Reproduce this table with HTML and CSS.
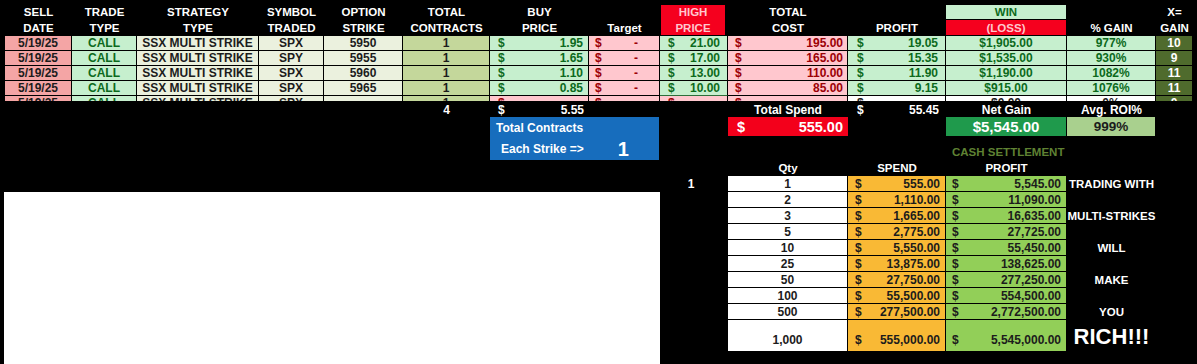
FILE: index.html
```html
<!DOCTYPE html>
<html>
<head>
<meta charset="utf-8">
<title>SSX Multi Strike</title>
<link rel="stylesheet" href="styles.css">
</head>
<body>
<div class="sheet">
  <div class="hd"><span>SELL</span><span>DATE</span></div>
  <div class="hd"><span>TRADE</span><span>TYPE</span></div>
  <div class="hd"><span>STRATEGY</span><span>TYPE</span></div>
  <div class="hd"><span>SYMBOL</span><span>TRADED</span></div>
  <div class="hd"><span>OPTION</span><span>STRIKE</span></div>
  <div class="hd"><span>TOTAL</span><span>CONTRACTS</span></div>
  <div class="hd"><span>BUY</span><span>PRICE</span></div>
  <div class="hd"><span>&nbsp;</span><span>Target</span></div>
  <div class="hd hd-high"><span>HIGH</span><span>PRICE</span></div>
  <div class="hd"><span>TOTAL</span><span>COST</span></div>
  <div class="hd"><span>&nbsp;</span><span>PROFIT</span></div>
  <div class="hd-win">WIN</div>
  <div class="hd-loss">(LOSS)</div>
  <div class="hd"><span>&nbsp;</span><span>% GAIN</span></div>
  <div class="hd"><span>X=</span><span>GAIN</span></div>

  <!-- row 1 -->
  <div class="d date">5/19/25</div>
  <div class="d good">CALL</div>
  <div class="d pale">SSX MULTI STRIKE</div>
  <div class="d pale">SPX</div>
  <div class="d pale">5950</div>
  <div class="d olive">1</div>
  <div class="d good m m-buy"><span>$</span><span>1.95</span></div>
  <div class="d bad m m-tgt"><span>$</span><span class="dash">-</span></div>
  <div class="d good m m-high"><span>$</span><span>21.00</span></div>
  <div class="d bad m m-cost"><span>$</span><span>195.00</span></div>
  <div class="d good m m-profit"><span>$</span><span>19.05</span></div>
  <div class="d good">$1,905.00</div>
  <div class="d good">977%</div>
  <div class="d dark">10</div>

  <!-- row 2 -->
  <div class="d date">5/19/25</div>
  <div class="d good">CALL</div>
  <div class="d pale">SSX MULTI STRIKE</div>
  <div class="d pale">SPY</div>
  <div class="d pale">5955</div>
  <div class="d olive">1</div>
  <div class="d good m m-buy"><span>$</span><span>1.65</span></div>
  <div class="d bad m m-tgt"><span>$</span><span class="dash">-</span></div>
  <div class="d good m m-high"><span>$</span><span>17.00</span></div>
  <div class="d bad m m-cost"><span>$</span><span>165.00</span></div>
  <div class="d good m m-profit"><span>$</span><span>15.35</span></div>
  <div class="d good">$1,535.00</div>
  <div class="d good">930%</div>
  <div class="d dark">9</div>

  <!-- row 3 -->
  <div class="d date">5/19/25</div>
  <div class="d good">CALL</div>
  <div class="d pale">SSX MULTI STRIKE</div>
  <div class="d pale">SPX</div>
  <div class="d pale">5960</div>
  <div class="d olive">1</div>
  <div class="d good m m-buy"><span>$</span><span>1.10</span></div>
  <div class="d bad m m-tgt"><span>$</span><span class="dash">-</span></div>
  <div class="d good m m-high"><span>$</span><span>13.00</span></div>
  <div class="d bad m m-cost"><span>$</span><span>110.00</span></div>
  <div class="d good m m-profit"><span>$</span><span>11.90</span></div>
  <div class="d good">$1,190.00</div>
  <div class="d good">1082%</div>
  <div class="d dark">11</div>

  <!-- row 4 -->
  <div class="d date">5/19/25</div>
  <div class="d good">CALL</div>
  <div class="d pale">SSX MULTI STRIKE</div>
  <div class="d pale">SPX</div>
  <div class="d pale">5965</div>
  <div class="d olive">1</div>
  <div class="d good m m-buy"><span>$</span><span>0.85</span></div>
  <div class="d bad m m-tgt"><span>$</span><span class="dash">-</span></div>
  <div class="d good m m-high high-last"><span>$</span><span>10.00</span></div>
  <div class="d bad m m-cost"><span>$</span><span>85.00</span></div>
  <div class="d good m m-profit"><span>$</span><span>9.15</span></div>
  <div class="d good">$915.00</div>
  <div class="d good">1076%</div>
  <div class="d dark">11</div>

  <!-- row 5, cut off by the window of the sheet -->
  <div class="d p date">5/19/25</div>
  <div class="d p good">CALL</div>
  <div class="d p pale">SSX MULTI STRIKE</div>
  <div class="d p pale">SPX</div>
  <div class="d p pale">-</div>
  <div class="d p olive">1</div>
  <div class="d p bad m m-buy"><span>$</span><span></span></div>
  <div class="d p bad m m-tgt"><span>$</span><span class="dash">-</span></div>
  <div class="d p bad m m-high"><span>$</span><span></span></div>
  <div class="d p bad m m-cost"><span>$</span><span></span></div>
  <div class="d p blank m m-profit"><span>$</span><span></span></div>
  <div class="d p blank">$0.00</div>
  <div class="d p blank">0%</div>
  <div class="d p dark">0</div>

  <!-- summary -->
  <div class="sum sum-count">4</div>
  <div class="sum sum-buy m m-buy"><span>$</span><span>5.55</span></div>
  <div class="sum sum-spend-label">Total Spend</div>
  <div class="sum sum-profit m m-profit"><span>$</span><span>55.45</span></div>
  <div class="sum sum-net-label">Net Gain</div>
  <div class="sum sum-roi-label">Avg. ROI%</div>

  <div class="blue">
    <div class="blue-l1">Total Contracts</div>
    <div class="blue-l2"><span>Each Strike =&gt;</span><span class="big-one">1</span></div>
  </div>
  <div class="spend-box"><span>$</span><span>555.00</span></div>
  <div class="net-box">$5,545.00</div>
  <div class="roi-box">999%</div>

  <div class="cash-title">CASH SETTLEMENT</div>
  <div class="ch ch-qty">Qty</div>
  <div class="ch ch-spend">SPEND</div>
  <div class="ch ch-profit">PROFIT</div>
  <div class="multi">1</div>

  <div class="cash">
    <div class="q">1</div><div class="s"><span>$</span><span>555.00</span></div><div class="g"><span>$</span><span>5,545.00</span></div>
    <div class="q">2</div><div class="s"><span>$</span><span>1,110.00</span></div><div class="g"><span>$</span><span>11,090.00</span></div>
    <div class="q">3</div><div class="s"><span>$</span><span>1,665.00</span></div><div class="g"><span>$</span><span>16,635.00</span></div>
    <div class="q">5</div><div class="s"><span>$</span><span>2,775.00</span></div><div class="g"><span>$</span><span>27,725.00</span></div>
    <div class="q">10</div><div class="s"><span>$</span><span>5,550.00</span></div><div class="g"><span>$</span><span>55,450.00</span></div>
    <div class="q">25</div><div class="s"><span>$</span><span>13,875.00</span></div><div class="g"><span>$</span><span>138,625.00</span></div>
    <div class="q">50</div><div class="s"><span>$</span><span>27,750.00</span></div><div class="g"><span>$</span><span>277,250.00</span></div>
    <div class="q">100</div><div class="s"><span>$</span><span>55,500.00</span></div><div class="g"><span>$</span><span>554,500.00</span></div>
    <div class="q">500</div><div class="s"><span>$</span><span>277,500.00</span></div><div class="g"><span>$</span><span>2,772,500.00</span></div>
    <div class="q last">1,000</div><div class="s last"><span>$</span><span>555,000.00</span></div><div class="g last"><span>$</span><span>5,545,000.00</span></div>
  </div>

  <div class="slogan">
    <div>TRADING WITH</div>
    <div></div>
    <div>MULTI-STRIKES</div>
    <div></div>
    <div>WILL</div>
    <div></div>
    <div>MAKE</div>
    <div></div>
    <div>YOU</div>
    <div class="rich">RICH!!!</div>
  </div>

  <div class="chart"></div>
</div>
</body>
</html>
```

FILE: styles.css
```css
* { box-sizing: border-box; margin: 0; padding: 0; }

html, body {
  background: #000;
}

body {
  width: 1197px;
  height: 364px;
  overflow: hidden;
  padding-top: 5px;
  font-family: "Liberation Sans", Arial, sans-serif;
  font-weight: 700;
  font-size: 12px;
  color: #fff;
}

.sheet {
  display: grid;
  margin-left: 5px;
  grid-template-columns: 67px 65px 122px 65px 79px 87px 99px 71px 68px 120px 98px 121px 89px 37px;
  grid-template-rows: 15px 16px 15px 15px 15px 15px 5px 3px 13px 19px 24px 16px repeat(9, 16px) 32px 12px;
}

/* header */
.hd {
  grid-row: 1 / 3;
  display: flex;
  flex-direction: column;
  align-items: center;
  font-size: 11.5px;
  line-height: 15px;
  white-space: nowrap;
}
.hd span { display: block; height: 15px; }
.hd span:last-child { height: 16px; line-height: 16px; }

.hd-high {
  background: #f5001e;
  color: #ffc7ce;
  margin: 0 3px 1px 1px;
}

.hd-win {
  grid-area: 1 / 12;
  background: #c6efce;
  color: #0c6a1c;
  font-size: 11.5px;
  display: flex;
  align-items: center;
  justify-content: center;
  margin: 0 1px 1px 0;
}
.hd-loss {
  grid-area: 2 / 12;
  background: #f5001e;
  color: #ffc7ce;
  font-size: 11.5px;
  display: flex;
  align-items: center;
  justify-content: center;
  margin: 0 1px 1px 0;
}

/* data cells */
.d {
  display: flex;
  align-items: center;
  justify-content: center;
  border-right: 1px solid #000;
  border-bottom: 1px solid #000;
  line-height: 14px;
  white-space: nowrap;
  overflow: hidden;
}
.d.p {
  align-items: flex-start;
  border-bottom: 0;
}

.date  { background: #f4a5a5; color: #1c1c1c; }
.good  { background: #c6efce; color: #0c6a1c; }
.pale  { background: #ebf1de; color: #1c1c1c; }
.olive { background: #c4d79b; color: #1c1c1c; }
.bad   { background: #ffc7ce; color: #9c0006; }
.dark  { background: #4f6b2d; color: #fff; }
.blank { background: #fff; color: #1c1c1c; }

.m { justify-content: space-between; }
.m-buy    { padding: 0 5px 0 8px; }
.m-tgt    { padding: 0 4px 0 6px; }
.m-high   { padding: 0 7px 0 8px; }
.m-cost   { padding: 0 4px 0 7px; }
.m-profit { padding: 0 7px 0 9px; }
.dash { padding-right: 17px; }

.high-last { border-bottom-color: #2c6e3a; }

/* summary row */
.sum {
  display: flex;
  align-items: center;
  justify-content: center;
  line-height: 13px;
  white-space: nowrap;
}
.sum.m { justify-content: space-between; }
.sum-count       { grid-area: 9 / 6; }
.sum-buy         { grid-area: 9 / 7; }
.sum-spend-label { grid-area: 9 / 10; }
.sum-profit      { grid-area: 9 / 11; }
.sum-net-label   { grid-area: 9 / 12; }
.sum-roi-label   { grid-area: 9 / 13; }

.blue {
  grid-area: 10 / 7 / 12 / 9;
  background: #176dbd;
  margin-right: 1px;
  display: flex;
  flex-direction: column;
}
.blue-l1 {
  height: 21px;
  display: flex;
  align-items: center;
  padding-left: 6px;
}
.blue-l2 {
  height: 22px;
  display: flex;
  align-items: center;
  padding-left: 11px;
}
.big-one {
  font-size: 20px;
  margin-left: 34px;
}

.spend-box {
  grid-area: 10 / 10;
  background: #f3001b;
  display: flex;
  align-items: center;
  justify-content: space-between;
  padding: 0 5px 0 9px;
  font-size: 14.5px;
}
.net-box {
  grid-area: 10 / 12;
  background: #1f9a4c;
  display: flex;
  align-items: center;
  justify-content: center;
  font-size: 15px;
  margin-right: 1px;
}
.roi-box {
  grid-area: 10 / 13;
  background: #a9d08e;
  color: #1c1c1c;
  display: flex;
  align-items: center;
  justify-content: center;
  font-size: 13.5px;
  margin-right: 1px;
}

.cash-title {
  grid-area: 11 / 12 / 12 / 14;
  justify-self: start;
  margin-left: 6px;
  color: #5f8233;
  font-size: 11.5px;
  display: flex;
  align-items: flex-end;
  padding-bottom: 2px;
  white-space: nowrap;
}

.ch {
  display: flex;
  align-items: center;
  justify-content: center;
  font-size: 11.5px;
}
.ch-qty    { grid-area: 12 / 10; }
.ch-spend  { grid-area: 12 / 11; }
.ch-profit { grid-area: 12 / 12; }

.multi {
  grid-area: 13 / 9;
  display: flex;
  align-items: center;
  justify-content: center;
  padding-right: 6px;
}

/* cash settlement table */
.cash {
  grid-area: 13 / 10 / 23 / 13;
  display: grid;
  grid-template-columns: 120px 98px 121px;
  grid-template-rows: repeat(9, 16px) 32px;
  color: #1c1c1c;
}
.cash > div {
  display: flex;
  align-items: center;
  border-right: 1px solid #000;
  border-bottom: 1px solid #000;
  white-space: nowrap;
}
.cash .q { background: #fff; justify-content: center; }
.cash .s { background: #f9b935; justify-content: space-between; padding: 0 5px 0 7px; }
.cash .g { background: #92cf58; justify-content: space-between; padding: 0 5px 0 6px; }
.cash .last { align-items: flex-end; padding-bottom: 4px; }

.slogan {
  grid-area: 13 / 13 / 23 / 14;
  display: grid;
  grid-template-rows: repeat(9, 16px) 32px;
  justify-items: center;
  align-items: center;
  font-size: 11.5px;
  white-space: nowrap;
}
.rich {
  font-size: 22px;
  align-self: end;
  padding-bottom: 2px;
}

.chart {
  grid-area: 14 / 1 / 24 / 9;
  background: #fff;
  margin-left: -1px;
}
```
